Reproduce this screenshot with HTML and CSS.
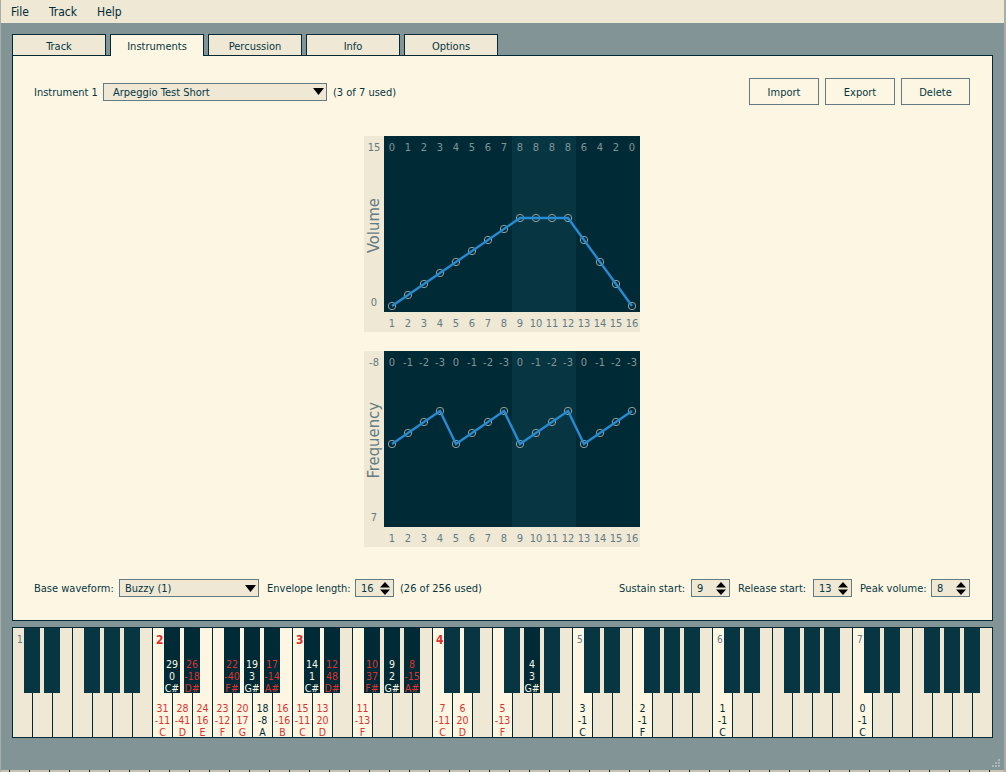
FILE: index.html
```html
<!DOCTYPE html>
<html lang="en">
<head>
<meta charset="utf-8">
<title>Instruments</title>
<link rel="stylesheet" href="styles.css">
</head>
<body>
<div class="window">
  <nav class="menubar"><span class="menu">File</span><span class="menu">Track</span><span class="menu">Help</span></nav>
  <main class="content">
    <div class="tabs">
      <div class="tab">Track</div>
      <div class="tab selected">Instruments</div>
      <div class="tab">Percussion</div>
      <div class="tab">Info</div>
      <div class="tab">Options</div>
    </div>
    <section class="panel">
      <div class="toprow">
        <span class="lbl w-instrument">Instrument 1</span>
        <div class="combo combo-wide"><span>Arpeggio Test Short</span><svg class="caret" width="11" height="7" viewBox="0 0 11 7"><path d="M0 0H11L5.5 7Z"/></svg></div>
        <span class="lbl">(3 of 7 used)</span>
        <div class="buttons">
          <div class="btn">Import</div>
          <div class="btn">Export</div>
          <div class="btn btn-narrow">Delete</div>
        </div>
      </div>

      <div class="chart chart-volume">
        <div class="axis"><span>15</span><span class="axis-title">Volume</span><span class="axis-min">0</span></div>
        <div class="plot">
          <div class="vals-row"><span>0</span><span>1</span><span>2</span><span>3</span><span>4</span><span>5</span><span>6</span><span>7</span><span>8</span><span>8</span><span>8</span><span>8</span><span>6</span><span>4</span><span>2</span><span>0</span></div>
          <svg class="graph" width="256" height="176" viewBox="0 0 256 176">
            <g class="dots">
              <circle cx="8" cy="170" r="3.7"/><circle cx="24" cy="159" r="3.7"/><circle cx="40" cy="148" r="3.7"/><circle cx="56" cy="137" r="3.7"/><circle cx="72" cy="126" r="3.7"/><circle cx="88" cy="115" r="3.7"/><circle cx="104" cy="104" r="3.7"/><circle cx="120" cy="93" r="3.7"/><circle cx="136" cy="82" r="3.7"/><circle cx="152" cy="82" r="3.7"/><circle cx="168" cy="82" r="3.7"/><circle cx="184" cy="82" r="3.7"/><circle cx="200" cy="104" r="3.7"/><circle cx="216" cy="126" r="3.7"/><circle cx="232" cy="148" r="3.7"/><circle cx="248" cy="170" r="3.7"/>
            </g>
            <polyline class="line" points="8,170 136,82 184,82 248,170"/>
          </svg>
        </div>
        <div class="index-row"><span>1</span><span>2</span><span>3</span><span>4</span><span>5</span><span>6</span><span>7</span><span>8</span><span>9</span><span>10</span><span>11</span><span>12</span><span>13</span><span>14</span><span>15</span><span>16</span></div>
      </div>

      <div class="chart chart-freq">
        <div class="axis"><span>-8</span><span class="axis-title">Frequency</span><span class="axis-min">7</span></div>
        <div class="plot">
          <div class="vals-row"><span>0</span><span>-1</span><span>-2</span><span>-3</span><span>0</span><span>-1</span><span>-2</span><span>-3</span><span>0</span><span>-1</span><span>-2</span><span>-3</span><span>0</span><span>-1</span><span>-2</span><span>-3</span></div>
          <svg class="graph" width="256" height="176" viewBox="0 0 256 176">
            <g class="dots">
              <circle cx="8" cy="93" r="3.7"/><circle cx="24" cy="82" r="3.7"/><circle cx="40" cy="71" r="3.7"/><circle cx="56" cy="60" r="3.7"/><circle cx="72" cy="93" r="3.7"/><circle cx="88" cy="82" r="3.7"/><circle cx="104" cy="71" r="3.7"/><circle cx="120" cy="60" r="3.7"/><circle cx="136" cy="93" r="3.7"/><circle cx="152" cy="82" r="3.7"/><circle cx="168" cy="71" r="3.7"/><circle cx="184" cy="60" r="3.7"/><circle cx="200" cy="93" r="3.7"/><circle cx="216" cy="82" r="3.7"/><circle cx="232" cy="71" r="3.7"/><circle cx="248" cy="60" r="3.7"/>
            </g>
            <polyline class="line" points="8,93 56,60 72,93 120,60 136,93 184,60 200,93 248,60"/>
          </svg>
        </div>
        <div class="index-row"><span>1</span><span>2</span><span>3</span><span>4</span><span>5</span><span>6</span><span>7</span><span>8</span><span>9</span><span>10</span><span>11</span><span>12</span><span>13</span><span>14</span><span>15</span><span>16</span></div>
      </div>

      <div class="bottomrow">
        <span class="lbl w-base">Base waveform:</span>
        <div class="combo combo-short"><span>Buzzy (1)</span><svg class="caret" width="11" height="7" viewBox="0 0 11 7"><path d="M0 0H11L5.5 7Z"/></svg></div>
        <span class="lbl lbl-after w-envelope">Envelope length:</span>
        <div class="spin"><span>16</span><svg class="updown" width="10" height="13" viewBox="0 0 10 13"><path d="M5 0L10 5.5H0ZM0 7.5H10L5 13Z"/></svg></div>
        <span class="lbl lbl-used">(26 of 256 used)</span>
        <div class="rightgroup">
          <span class="lbl w-sustain">Sustain start:</span>
          <div class="spin"><span>9</span><svg class="updown" width="10" height="13" viewBox="0 0 10 13"><path d="M5 0L10 5.5H0ZM0 7.5H10L5 13Z"/></svg></div>
          <span class="lbl lbl-after w-release">Release start:</span>
          <div class="spin"><span>13</span><svg class="updown" width="10" height="13" viewBox="0 0 10 13"><path d="M5 0L10 5.5H0ZM0 7.5H10L5 13Z"/></svg></div>
          <span class="lbl lbl-after w-peak">Peak volume:</span>
          <div class="spin"><span>8</span><svg class="updown" width="10" height="13" viewBox="0 0 10 13"><path d="M5 0L10 5.5H0ZM0 7.5H10L5 13Z"/></svg></div>
        </div>
      </div>
    </section>

    <section class="piano">
      <!-- octave 1 -->
      <div class="key"><div class="oct">1</div><div class="blk"></div></div>
      <div class="key"><div class="blk"></div></div>
      <div class="key"></div>
      <div class="key"><div class="blk"></div></div>
      <div class="key"><div class="blk"></div></div>
      <div class="key"><div class="blk"></div></div>
      <div class="key"></div>
      <!-- octave 2 -->
      <div class="key on red"><div class="oct hot">2</div><div class="vals"><span>31</span><span>-11</span><span>C</span></div><div class="blk on"><div class="vals"><span>29</span><span>0</span><span>C#</span></div></div></div>
      <div class="key on red"><div class="vals"><span>28</span><span>-41</span><span>D</span></div><div class="blk on red"><div class="vals"><span>26</span><span>-18</span><span>D#</span></div></div></div>
      <div class="key on red"><div class="vals"><span>24</span><span>16</span><span>E</span></div></div>
      <div class="key on red"><div class="vals"><span>23</span><span>-12</span><span>F</span></div><div class="blk on red"><div class="vals"><span>22</span><span>-40</span><span>F#</span></div></div></div>
      <div class="key on red"><div class="vals"><span>20</span><span>17</span><span>G</span></div><div class="blk on"><div class="vals"><span>19</span><span>3</span><span>G#</span></div></div></div>
      <div class="key on"><div class="vals"><span>18</span><span>-8</span><span>A</span></div><div class="blk on red"><div class="vals"><span>17</span><span>-14</span><span>A#</span></div></div></div>
      <div class="key on red"><div class="vals"><span>16</span><span>-16</span><span>B</span></div></div>
      <!-- octave 3 -->
      <div class="key on red"><div class="oct hot">3</div><div class="vals"><span>15</span><span>-11</span><span>C</span></div><div class="blk on"><div class="vals"><span>14</span><span>1</span><span>C#</span></div></div></div>
      <div class="key on red"><div class="vals"><span>13</span><span>20</span><span>D</span></div><div class="blk on red"><div class="vals"><span>12</span><span>48</span><span>D#</span></div></div></div>
      <div class="key"></div>
      <div class="key on red"><div class="vals"><span>11</span><span>-13</span><span>F</span></div><div class="blk on red"><div class="vals"><span>10</span><span>37</span><span>F#</span></div></div></div>
      <div class="key"><div class="blk on"><div class="vals"><span>9</span><span>2</span><span>G#</span></div></div></div>
      <div class="key"><div class="blk on red"><div class="vals"><span>8</span><span>-15</span><span>A#</span></div></div></div>
      <div class="key"></div>
      <!-- octave 4 -->
      <div class="key on red"><div class="oct hot">4</div><div class="vals"><span>7</span><span>-11</span><span>C</span></div><div class="blk"></div></div>
      <div class="key on red"><div class="vals"><span>6</span><span>20</span><span>D</span></div><div class="blk"></div></div>
      <div class="key"></div>
      <div class="key on red"><div class="vals"><span>5</span><span>-13</span><span>F</span></div><div class="blk"></div></div>
      <div class="key"><div class="blk on"><div class="vals"><span>4</span><span>3</span><span>G#</span></div></div></div>
      <div class="key"><div class="blk"></div></div>
      <div class="key"></div>
      <!-- octave 5 -->
      <div class="key on"><div class="oct">5</div><div class="vals"><span>3</span><span>-1</span><span>C</span></div><div class="blk"></div></div>
      <div class="key"><div class="blk"></div></div>
      <div class="key"></div>
      <div class="key on"><div class="vals"><span>2</span><span>-1</span><span>F</span></div><div class="blk"></div></div>
      <div class="key"><div class="blk"></div></div>
      <div class="key"><div class="blk"></div></div>
      <div class="key"></div>
      <!-- octave 6 -->
      <div class="key on"><div class="oct">6</div><div class="vals"><span>1</span><span>-1</span><span>C</span></div><div class="blk"></div></div>
      <div class="key"><div class="blk"></div></div>
      <div class="key"></div>
      <div class="key"><div class="blk"></div></div>
      <div class="key"><div class="blk"></div></div>
      <div class="key"><div class="blk"></div></div>
      <div class="key"></div>
      <!-- octave 7 -->
      <div class="key on"><div class="oct">7</div><div class="vals"><span>0</span><span>-1</span><span>C</span></div><div class="blk"></div></div>
      <div class="key"><div class="blk"></div></div>
      <div class="key"></div>
      <div class="key"><div class="blk"></div></div>
      <div class="key"><div class="blk"></div></div>
      <div class="key"><div class="blk"></div></div>
      <div class="key"></div>
    </section>
  </main>
  <svg class="grip" width="9" height="9" viewBox="0 0 9 9"><path d="M6 0h2v2H6zM3 3h2v2H3zM6 3h2v2H6zM0 6h2v2H0zM3 6h2v2H3zM6 6h2v2H6z"/></svg>
  <div class="ruler"></div>
</div>
</body>
</html>
```
FILE: styles.css
```css
* { box-sizing: border-box; }
html, body { margin: 0; padding: 0; }
body {
  width: 1006px;
  height: 772px;
  overflow: hidden;
  font: 11px/16px "DejaVu Sans Condensed", "DejaVu Sans", sans-serif;
  font-stretch: condensed;
  color: #073642;
}
.window {
  position: relative;
  display: flex;
  flex-direction: column;
  height: 772px;
  background: #839496;
  border-left: 1px solid #a9aeac;
  border-right: 2px solid #a9aeac;
}
.menubar {
  display: flex;
  height: 23px;
  flex: none;
  align-items: center;
  background: #eee8d5;
  color: #002b36;
  padding-left: 10px;
  gap: 20px;
  font-size: 12px;
}
.content {
  flex: 1;
  padding: 11px 11px 0 11px;
}
.ruler {
  flex: none;
  height: 2px;
  background: repeating-linear-gradient(90deg, #c9c4b2 0 8px, #002b36 8px 9px, #c9c4b2 9px 20px);
}
.grip {
  position: absolute;
  right: 3px;
  bottom: 4px;
  fill: #a9b7b8;
}
/* tabs */
.tabs {
  display: flex;
  gap: 4px;
  height: 21px;
}
.tab {
  position: relative;
  width: 94px;
  height: 21px;
  background: #eee8d5;
  border: 1px solid #002b36;
  border-bottom: 0;
  text-align: center;
  line-height: 24px;
}
.tab.selected {
  height: 22px;
  background: #fdf6e3;
  z-index: 1;
}
/* panel */
.panel {
  height: 566px;
  background: #fdf6e3;
  border: 1px solid #002b36;
  padding: 22px 22px 0 21px;
}
.toprow, .bottomrow {
  display: flex;
  align-items: center;
}
.toprow { height: 27px; gap: 6px; }
.bottomrow { margin-top: 32px; height: 18px; gap: 7px; }
.lbl, .combo span, .spin span { white-space: nowrap; padding-top: 2px; }
.lbl-after { margin-left: 1px; }
.lbl-used { margin-left: -1px; }
.w-instrument { width: 63px; }
.w-base { width: 78px; }
.w-envelope { width: 81px; }
.w-sustain { width: 65px; }
.w-release { width: 68px; }
.w-peak { width: 64px; }
.combo {
  display: flex;
  align-items: center;
  justify-content: space-between;
  height: 18px;
  background: #eee8d5;
  border: 1px solid #657b83;
  padding: 0 2px 0 9px;
}
.combo-wide { width: 224px; }
.combo-short { width: 140px; padding-left: 5px; }
.buttons {
  display: flex;
  gap: 6px;
  margin-left: auto;
}
.btn {
  width: 70px;
  height: 27px;
  border: 1px solid #657b83;
  text-align: center;
  line-height: 27px;
}
.btn-narrow { width: 69px; }
.spin {
  display: flex;
  align-items: center;
  justify-content: space-between;
  width: 39px;
  height: 18px;
  background: #eee8d5;
  border: 1px solid #657b83;
  padding: 0 3px 0 5px;
}
.rightgroup {
  display: flex;
  align-items: center;
  gap: 7px;
  margin-left: auto;
}
/* charts */
.chart {
  display: grid;
  grid-template-columns: 20px 256px;
  grid-template-rows: 176px 20px;
  width: 276px;
  margin: 0 auto;
  background: #eee8d5;
  color: #657b83;
}
.chart-volume { margin-top: 31px; }
.chart-freq { margin-top: 19px; }
.axis {
  display: flex;
  flex-direction: column;
  align-items: center;
  padding-top: 4px;
}
.axis-title {
  writing-mode: vertical-rl;
  transform: rotate(180deg);
  font-size: 16.5px;
  line-height: 20px;
  margin: auto 0;
}
.axis-min { margin-bottom: 1px; }
.plot {
  position: relative;
  background: linear-gradient(90deg, #002b36 128px, #073642 128px 192px, #002b36 192px);
}
.vals-row, .index-row {
  display: grid;
  grid-template-columns: repeat(16, 16px);
  text-align: center;
  line-height: 24px;
  height: 20px;
}
.vals-row { color: #839496; }
.index-row { grid-column: 2; }
.graph {
  position: absolute;
  left: 0;
  top: 0;
}
.dots circle { fill: none; stroke: #93a1a1; stroke-width: 1; }
.line { fill: none; stroke: #268bd2; stroke-width: 2.4; }
/* piano */
.piano {
  display: flex;
  width: 981px;
  height: 111px;
  margin-top: 6px;
  border: 1px solid #002b36;
  border-right: 0;
  font-size: 10.5px;
  line-height: 12px;
}
.key {
  position: relative;
  display: flex;
  flex-direction: column;
  width: 20px;
  height: 109px;
  flex: none;
  background: #eee8d5;
  border-right: 1px solid #002b36;
  color: #002b36;
}
.key.on { background: #fdf6e3; }
.key.red { color: #dc322f; }
.oct {
  padding: 6px 0 0 4px;
  color: #657b83;
  font-size: 10px;
}
.oct.hot { color: #dc322f; font-weight: 700; font-size: 12px; padding-left: 3px; }
.vals {
  display: flex;
  flex-direction: column;
  align-items: center;
  margin-top: auto;
  margin-bottom: -1px;
  white-space: nowrap;
}
.blk {
  position: absolute;
  left: 11px;
  top: 0;
  z-index: 1;
  display: flex;
  flex-direction: column;
  width: 16px;
  height: 65px;
  background: #073642;
  color: #fdf6e3;
}
.blk.on { background: #002b36; }
.blk.red { color: #dc322f; }
```
